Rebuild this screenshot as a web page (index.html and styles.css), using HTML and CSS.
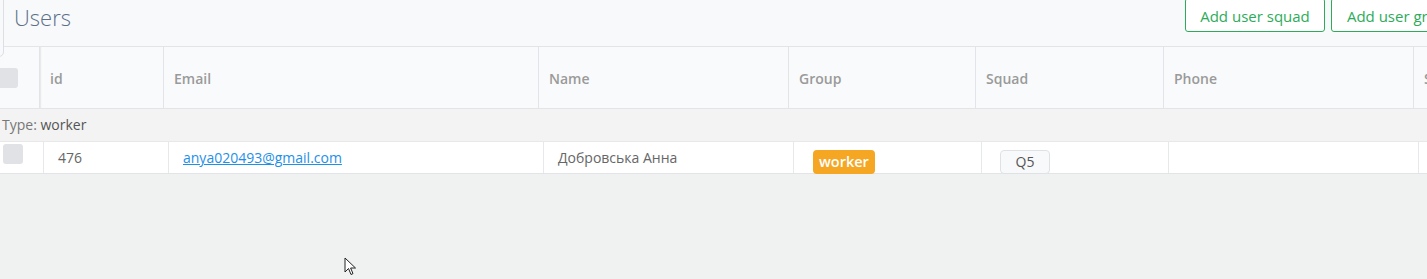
FILE: index.html
```html
<!DOCTYPE html>
<html lang="en">
<head>
  <meta charset="UTF-8">
  <title>Users</title>
  <link rel="stylesheet" href="styles.css">
</head>
<body>
  <div class="side-edge"></div>
  <div class="page-head">
    <h1>Users</h1>
    <div class="actions">
      <button class="btn-outline">Add user squad</button>
      <button class="btn-outline">Add user group</button>
    </div>
  </div>

  <div class="grid-head">
    <div class="cell"><span class="check"></span></div>
    <div class="cell">id</div>
    <div class="cell">Email</div>
    <div class="cell">Name</div>
    <div class="cell">Group</div>
    <div class="cell">Squad</div>
    <div class="cell">Phone</div>
    <div class="cell">Status</div>
  </div>

  <div class="group-row">Type: <b>worker</b></div>

  <div class="grid-row">
    <div class="cell"><span class="check"></span></div>
    <div class="cell">476</div>
    <div class="cell"><a href="#">anya020493@gmail.com</a></div>
    <div class="cell">Добровська Анна</div>
    <div class="cell"><span class="badge">worker</span></div>
    <div class="cell"><span class="tag">Q5</span></div>
    <div class="cell"></div>
    <div class="cell"></div>
  </div>

  <svg class="cursor" width="14" height="20" viewBox="0 0 14 20">
    <path d="M1 1 L1 15 L4.5 11.5 L7 17.5 L9 16.6 L6.6 11 L11.5 11 Z" fill="#fff" stroke="#222" stroke-width="1" stroke-linejoin="round"/>
  </svg>
</body>
</html>
```

FILE: styles.css
```css
html, body { margin: 0; padding: 0; }
body {
  font-family: "Open Sans", "Liberation Sans", sans-serif;
  font-size: 14px;
  background: #f0f2f2;
  width: 1427px;
  height: 279px;
  overflow: hidden;
  position: relative;
  color: #666;
}

.side-edge {
  position: absolute;
  left: -10px; top: -5px;
  width: 12px; height: 60px;
  border: 1px solid #dcdfe3;
  border-radius: 0 0 5px 0;
  background: #f8f9fb;
}

.page-head {
  display: flex;
  justify-content: space-between;
  height: 46px;
  background: #f8f9fb;
  border-bottom: 1px solid #e2e4e7;
  padding-left: 14px;
}
.page-head h1 {
  margin: 0;
  font-size: 22px;
  font-weight: 300;
  color: #5b7088;
  line-height: 34px;
}
.actions { display: flex; gap: 6px; margin-top: -2px; margin-right: -44px; }
.btn-outline {
  font-family: inherit;
  font-size: 15px;
  color: #2dab5a;
  background: #fff;
  border: 1px solid #2dab5a;
  border-radius: 3px;
  height: 34px;
  width: 140px;
  padding: 2px 0 0;
  white-space: nowrap;
}

.grid-head, .grid-row {
  display: grid;
  width: 1700px;
}
.grid-head {
  grid-template-columns: 40px 124px 375px 250px 187px 188px 250px 286px;
  height: 61px;
  background: #f9fafb;
  border-bottom: 1px solid #e2e4e7;
}
.grid-head .cell {
  display: flex;
  align-items: center;
  padding-left: 10px;
  padding-top: 2px;
  border-right: 1px solid #e2e4e7;
  font-weight: 600;
  color: #9a9a9a;
}
.grid-head .cell:first-child { padding-left: 0; padding-top: 0; box-shadow: 1px 0 1px #e8eaec; }

.check {
  display: inline-block;
  width: 20px; height: 20px;
  background: #e0e2e5;
  border-radius: 3px;
  margin-left: -2px;
}

.group-row {
  height: 32px;
  line-height: 32px;
  background: #f3f3f3;
  padding-left: 2px;
  color: #777;
  border-bottom: 1px solid #e8e8e8;
}
.group-row b { font-weight: 400; color: #555; }

.grid-row {
  grid-template-columns: 44px 125px 375px 250px 188px 187px 250px 281px;
  height: 31px;
  background: #fff;
  border-bottom: 1px solid #e2e4e7;
}
.grid-row .cell {
  display: flex;
  align-items: center;
  padding-left: 14px;
  border-right: 1px solid #e6e8ea;
  color: #666;
}
.grid-row .cell:first-child { padding-left: 3px; align-items: flex-start; padding-top: 2px; }
.grid-row .cell:first-child .check { margin-left: 0; }
.grid-row a { color: #1e90e8; }
.grid-row .cell:nth-child(5), .grid-row .cell:nth-child(6) { padding-left: 18px; align-items: flex-end; }

.badge {
  background: #f5a623;
  color: #fff;
  font-weight: 600;
  font-size: 14.5px;
  padding: 1px 6px 1px;
  border-radius: 4px;
  margin-left: 1px;
  margin-bottom: -1px;
  line-height: 22px;
}
.tag {
  display: inline-block;
  width: 48px;
  text-align: center;
  background: #f8f9fa;
  border: 1px solid #dfe2e5;
  border-radius: 4px;
  color: #555;
  line-height: 22px;
  margin-bottom: -1px;
}

.cursor { position: absolute; left: 344px; top: 257px; }
```
